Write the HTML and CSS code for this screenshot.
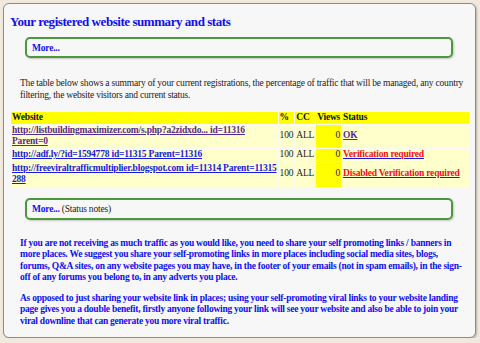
FILE: index.html
```html
<!DOCTYPE html>
<html lang="en">
<head>
  <meta charset="UTF-8">
  <title>Registered website summary</title>
  <link rel="stylesheet" href="styles.css">
</head>
<body>
  <div class="panel">
    <h2 class="title">Your registered website summary and stats</h2>
    <div class="more-box"><a href="#" class="more">More...</a></div>
    <p class="intro">The table below shows a summary of your current registrations, the percentage of traffic that will be managed, any country filtering, the website visitors and current status.</p>
    <table class="sites">
      <tr class="head">
        <th class="c-site">Website</th>
        <th class="c-pct">%</th>
        <th class="c-cc">CC</th>
        <th class="c-views">Views</th>
        <th class="c-status">Status</th>
      </tr>
      <tr>
        <td><a href="#" class="visited">http://listbuildingmaximizer.com/s.php?a2zidxdo... id=11316<br>Parent=0</a></td>
        <td>100</td>
        <td>ALL</td>
        <td class="views">0</td>
        <td><a href="#" class="visited">OK</a></td>
      </tr>
      <tr>
        <td><a href="#">http://adf.ly/?id=1594778 id=11315 Parent=11316</a></td>
        <td>100</td>
        <td>ALL</td>
        <td class="views">0</td>
        <td><a href="#"><span class="warn">Verification required</span></a></td>
      </tr>
      <tr class="tall">
        <td><a href="#">http://freeviraltrafficmultiplier.blogspot.com id=11314 Parent=11315<br>288</a></td>
        <td>100</td>
        <td>ALL</td>
        <td class="views">0</td>
        <td><a href="#"><span class="warn">Disabled Verification required</span></a></td>
      </tr>
    </table>
    <div class="more-box more-low"><a href="#" class="more">More...</a> <span class="note">(Status notes)</span></div>
    <p class="advice">If you are not receiving as much traffic as you would like, you need to share your self promoting links / banners in more places. We suggest you share your self-promoting links in more places including social media sites, blogs, forums, Q&amp;A sites, on any website pages you may have, in the footer of your emails (not in spam emails), in the sign-off of any forums you belong to, in any adverts you place.</p>
    <p class="advice">As opposed to just sharing your website link in places; using your self-promoting viral links to your website landing page gives you a double benefit, firstly anyone following your link will see your website and also be able to join your viral downline that can generate you more viral traffic.</p>
  </div>
</body>
</html>
```

FILE: styles.css
```css
* {
  box-sizing: border-box;
}
body {
  margin: 0;
  background: #f2e9dd;
  font-family: "Liberation Serif", "Times New Roman", serif;
  overflow: hidden;
}
.panel {
  margin: 3px 4px 0 3px;
  height: 335px;
  padding: 9px 6px 0 6px;
  background: #f7f7f7;
  border: 1px solid #8c8c8c;
  border-radius: 6px;
  box-shadow: 1px 1px 2px rgba(0,0,0,0.25);
}
.title {
  margin: 0;
  font-size: 13px;
  letter-spacing: -0.45px;
  line-height: 18px;
  color: #1010f0;
  font-weight: bold;
}
.more-box {
  margin: 6px 16px 0 15px;
  height: 21px;
  padding: 0 5px;
  display: flex;
  align-items: center;
  border: 2px solid #4a9a3c;
  border-radius: 5px;
  box-shadow: 1px 1px 2px rgba(0,0,0,0.2);
  font-size: 9.5px;
  letter-spacing: -0.2px;
}
.more {
  color: #1010ee;
  font-weight: bold;
  text-decoration: none;
}
.note {
  color: #222;
  margin-left: 2px;
}
.intro {
  margin: 19px 0 0 10px;
  font-size: 9.5px;
  letter-spacing: -0.2px;
  line-height: 12px;
  color: #222;
}
.sites {
  margin-top: 10px;
  width: 460px;
  border-spacing: 1px;
  font-size: 9.5px;
  letter-spacing: -0.2px;
  line-height: 11.5px;
  white-space: nowrap;
}
.sites th,
.sites td {
  padding: 0 1px;
}
.sites th {
  background: #ffff00;
  text-align: left;
  color: #111;
}
.sites td {
  background: #ffffcc;
  color: #222;
}
.sites td.views,
.sites th.c-views {
  background: #ffff00;
}
.sites td.views {
  text-align: right;
}
.sites tr + tr td {
  height: 12px;
}
.sites tr.tall td {
  height: 25px;
}
.c-site { width: 266px; }
.c-pct { width: 14px; }
.c-cc { width: 18px; }
.c-views { width: 23px; }
.sites a {
  color: #1a1add;
  font-weight: bold;
}
.sites a.visited {
  color: #5a2a8e;
}
.warn {
  color: #ee1111;
}
.more-low {
  margin-top: 10px;
  height: 22px;
}
.advice {
  margin: 18px 0 0 10px;
  font-size: 9.5px;
  letter-spacing: -0.25px;
  line-height: 11.5px;
  color: #1010ee;
  font-weight: bold;
}
.advice + .advice {
  margin-top: 9px;
}
```
